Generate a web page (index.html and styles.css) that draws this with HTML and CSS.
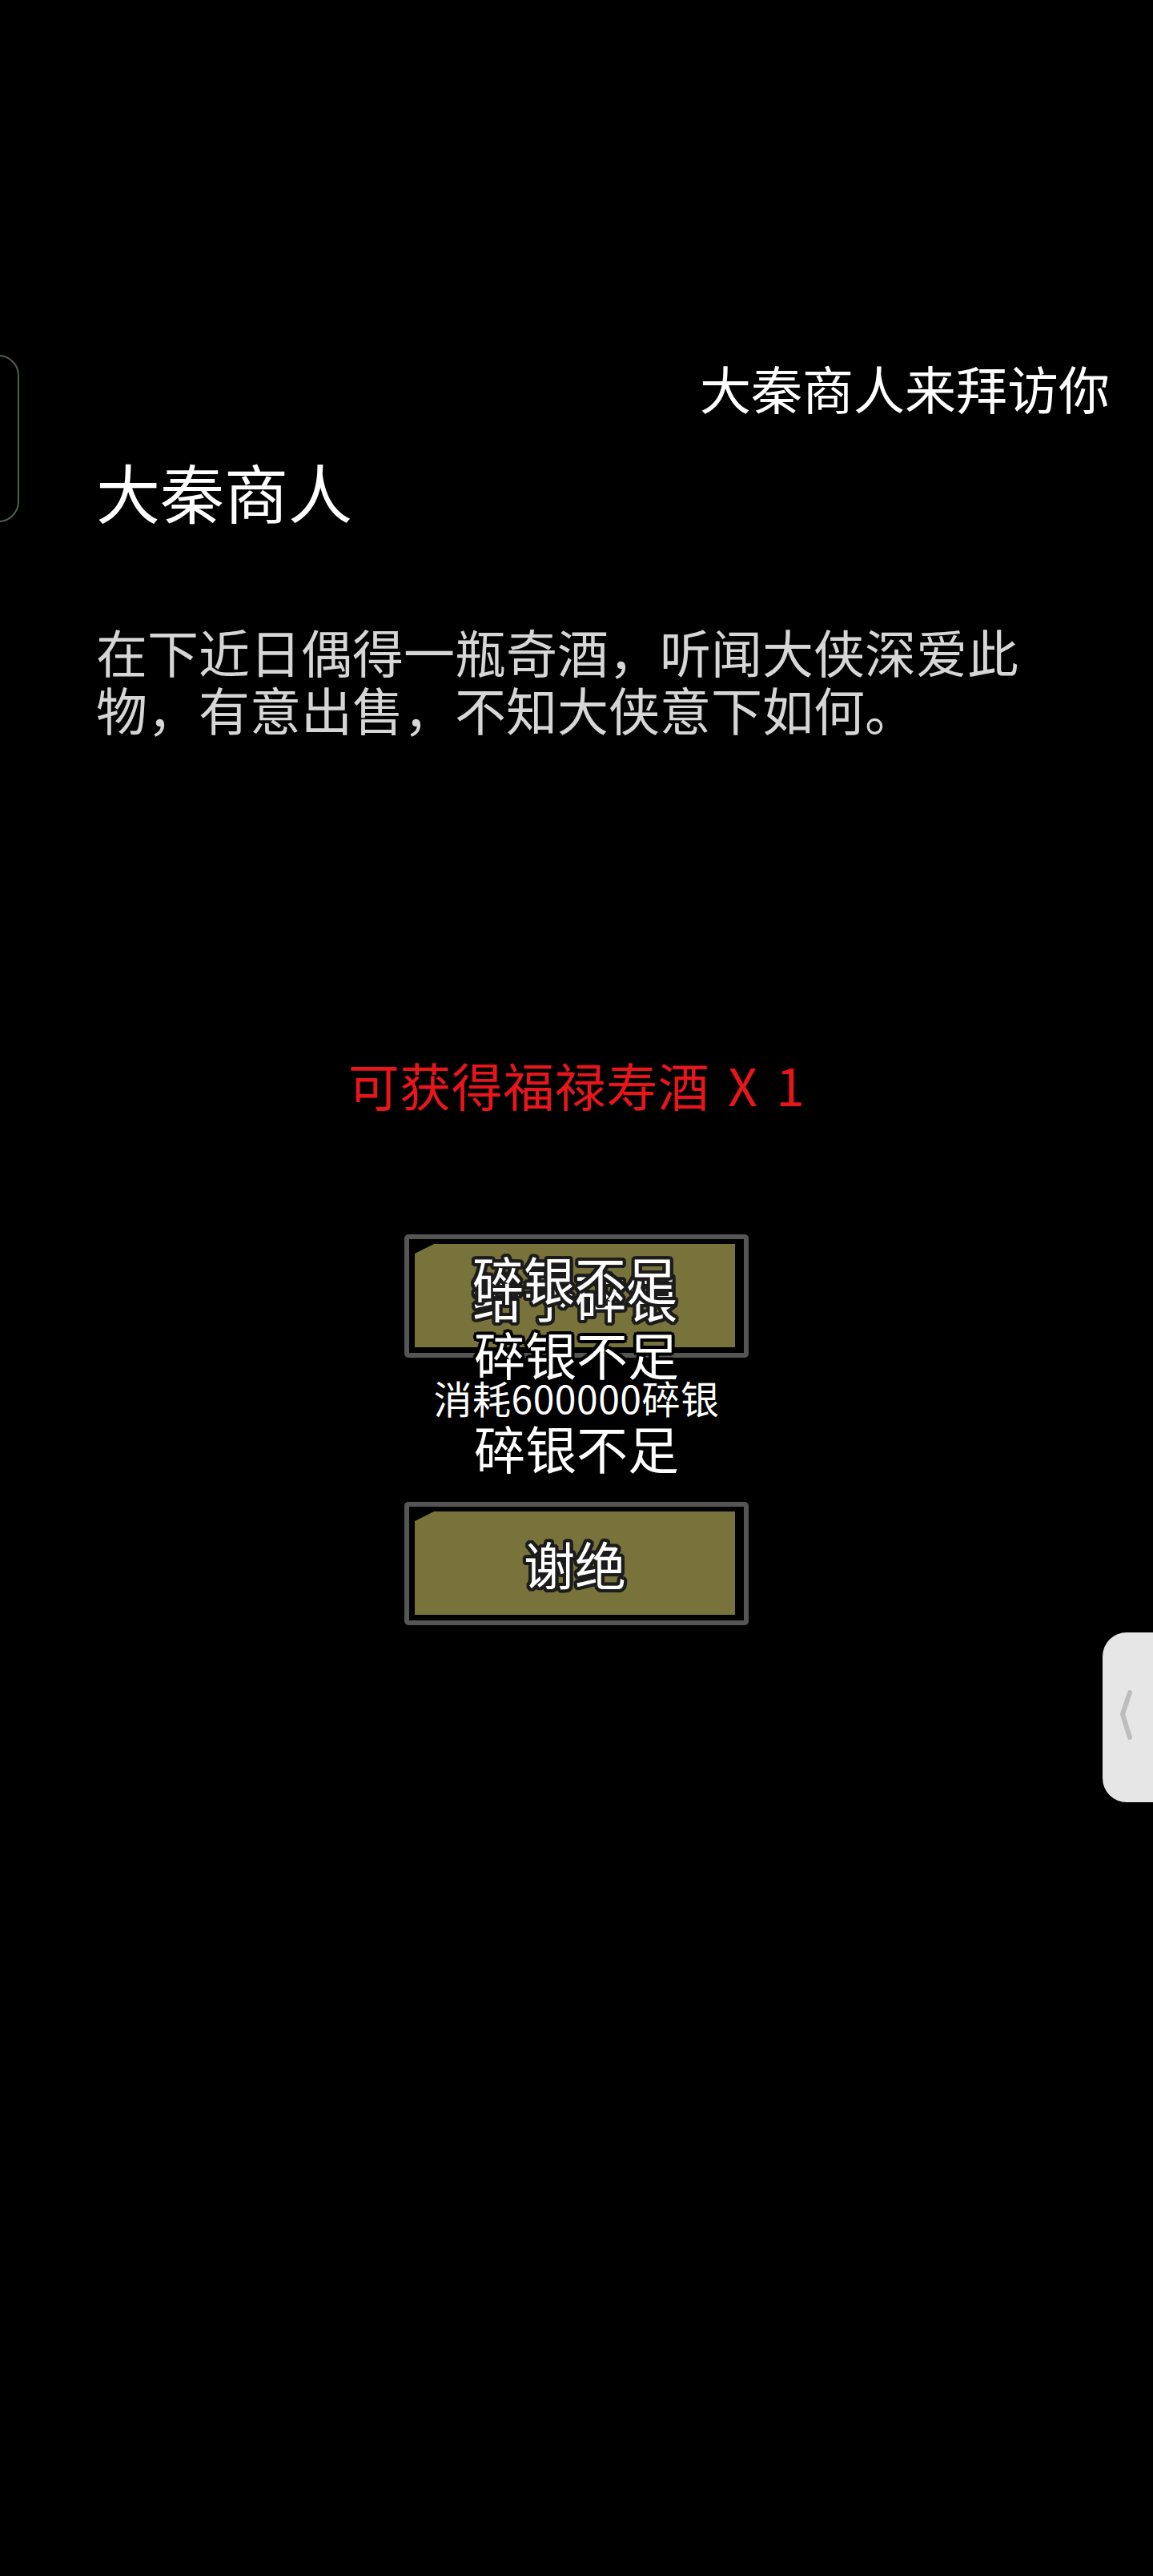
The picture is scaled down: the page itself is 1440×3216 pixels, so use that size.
FILE: index.html
```html
<!DOCTYPE html>
<html lang="zh-CN">
<head>
<meta charset="utf-8">
<title>大秦商人来拜访你</title>
<link rel="stylesheet" href="styles.css">
</head>
<body>
<div class="screen">
  <div class="edge-left"></div>
  <div class="edge-right">
    <svg class="chev" width="20" height="70" viewBox="0 0 20 70"><path d="M14 6 L5 33 L14 62" fill="none" stroke="#bdbdbd" stroke-width="6" stroke-linecap="round" stroke-linejoin="round"/></svg>
  </div>

  <div class="visit">大秦商人来拜访你</div>
  <div class="name">大秦商人</div>
  <p class="desc">在下近日偶得一瓶奇酒，听闻大侠深爱此物，有意出售，不知大侠意下如何。</p>

  <div class="reward">可获得福禄寿酒 X 1</div>

  <div class="actions">
    <div class="btn">
      <div class="btn-face">
        <span class="btn-label">给予碎银</span>
        <span class="btn-over">碎银不足</span>
      </div>
    </div>
    <div class="notes">
      <div class="note note-a">碎银不足</div>
      <div class="note note-b">消耗600000碎银</div>
      <div class="note note-c">碎银不足</div>
    </div>
    <div class="btn btn-second">
      <div class="btn-face">
        <span class="btn-label">谢绝</span>
      </div>
    </div>
  </div>
</div>
</body>
</html>
```

FILE: styles.css
```css
html, body {
  margin: 0;
  padding: 0;
  background: #000;
}

body {
  font-family: "Noto Sans CJK SC", "Noto Sans", sans-serif;
  color: #fff;
}

.screen {
  position: relative;
  width: 1440px;
  height: 3216px;
  overflow: hidden;
  background: #000;
  padding-top: 451px;
  box-sizing: border-box;
}

.edge-left {
  position: absolute;
  left: -40px;
  top: 443px;
  width: 64px;
  height: 209px;
  box-sizing: border-box;
  border: 2px solid #4f5f51;
  border-radius: 26px;
}

.edge-right {
  position: absolute;
  right: 0;
  top: 2038px;
  width: 63px;
  height: 212px;
  background: #e6e6e6;
  border-radius: 30px 0 0 30px;
  display: flex;
  align-items: center;
}

.chev {
  margin-left: 20px;
  margin-top: -4px;
}

.visit {
  font-size: 64px;
  line-height: 64px;
  text-align: right;
  padding-right: 54px;
  color: #fff;
}

.name {
  font-size: 80px;
  line-height: 80px;
  padding-left: 120px;
  margin-top: 57px;
  color: #fff;
}

.desc {
  margin: 124px 0 0 0;
  padding: 0 120px;
  font-size: 64px;
  line-height: 72px;
  color: #d6d6d6;
}

.reward {
  margin-top: 401px;
  font-size: 64px;
  line-height: 64px;
  text-align: center;
  word-spacing: 8px;
  letter-spacing: 0.5px;
  color: #e8161b;
}

.actions {
  margin-top: 156px;
  display: flex;
  flex-direction: column;
  align-items: center;
}

.btn {
  width: 430px;
  height: 154px;
  box-sizing: border-box;
  border: 6px solid #555555;
  border-radius: 5px;
  padding: 6px 11px 7px 7px;
  background: #000;
}

.btn-face {
  position: relative;
  width: 400px;
  height: 129px;
  background: #77733a;
  clip-path: polygon(24px 0, 100% 0, 100% 100%, 0 100%, 0 12px);
  display: flex;
  align-items: center;
  justify-content: center;
}

.btn-label,
.btn-over {
  font-size: 64px;
  line-height: 64px;
  color: #fff;
  text-shadow:
    4px 0 0 #1c1c1c, -4px 0 0 #1c1c1c, 0 4px 0 #1c1c1c, 0 -4px 0 #1c1c1c,
    3px 3px 0 #1c1c1c, -3px 3px 0 #1c1c1c, 3px -3px 0 #1c1c1c, -3px -3px 0 #1c1c1c,
    2px 4px 0 #1c1c1c, -2px 4px 0 #1c1c1c, 2px -4px 0 #1c1c1c, -2px -4px 0 #1c1c1c,
    4px 2px 0 #1c1c1c, -4px 2px 0 #1c1c1c, 4px -2px 0 #1c1c1c, -4px -2px 0 #1c1c1c;
  margin-top: -2px;
}

.btn-over {
  position: absolute;
  left: 0;
  right: 0;
  top: 10px;
  text-align: center;
  margin-top: 0;
}

.notes {
  display: flex;
  flex-direction: column;
  align-items: center;
  margin-top: -36px;
  position: relative;
}

.note {
  color: #fff;
  white-space: nowrap;
}

.note-a {
  font-size: 64px;
  line-height: 60px;
  text-shadow:
    4px 0 0 #000, -4px 0 0 #000, 0 4px 0 #000, 0 -4px 0 #000,
    3px 3px 0 #000, -3px 3px 0 #000, 3px -3px 0 #000, -3px -3px 0 #000;
}

.note-b {
  font-size: 48px;
  line-height: 50px;
  letter-spacing: 0.5px;
}

.note-c {
  font-size: 64px;
  line-height: 64px;
  margin-top: 5px;
}

.btn-second {
  margin-top: 37px;
}
```
